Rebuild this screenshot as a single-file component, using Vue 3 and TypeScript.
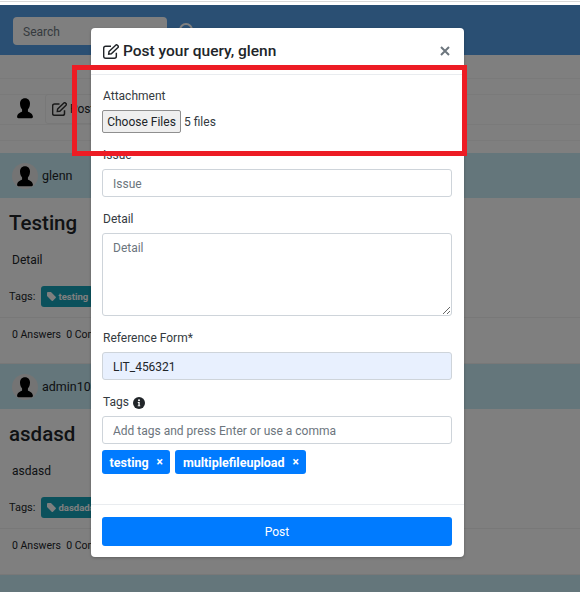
<template>
  <div class="page">
    <div class="browser-strip"></div>
    <nav class="navbar">
      <div class="search-box">Search</div>
      <svg class="search-icon" width="20" height="20" viewBox="0 0 20 20">
        <circle cx="9" cy="9" r="6" fill="none" stroke="#fff" stroke-width="2" />
      </svg>
    </nav>

    <div class="ask-row">
      <svg class="avatar-plain" width="20" height="24" viewBox="0 0 24 26">
        <path :d="silhouette" fill="#000" />
      </svg>
      <div class="ask-btn">
        <svg class="edit-small" width="15" height="14" viewBox="0 0 24 22">
          <path :d="editBox" fill="none" stroke="#333" stroke-width="2.4" />
          <path :d="editPen" fill="none" stroke="#333" stroke-width="2.4" />
        </svg>
        Post
      </div>
    </div>
    <div class="ask-foot"></div>

    <section v-for="card in cards" :key="card.title" class="card">
      <div class="card-head">
        <span class="avatar-round">
          <svg width="20" height="24" viewBox="0 0 24 26">
            <path :d="silhouette" fill="#000" />
          </svg>
        </span>
        <span class="card-user">{{ card.user }}</span>
      </div>
      <h2 class="card-title">{{ card.title }}</h2>
      <p class="card-detail">{{ card.detail }}</p>
      <div class="card-tags">
        Tags:
        <span class="tag-badge">
          <svg width="9" height="9" viewBox="0 0 10 10">
            <path d="M0 1a1 1 0 0 1 1-1h3.4l5.2 5.2a1 1 0 0 1 0 1.4L6.600 9.600a1 1 0 0 1-1.400 0L0 4.400z" fill="#fff" />
          </svg>
          {{ card.tag }}
        </span>
      </div>
      <div class="card-foot">0 Answers &nbsp;0 Comments</div>
    </section>

    <div class="last-card"></div>

    <div class="overlay"></div>

    <div class="modal">
      <header class="modal-header">
        <h5 class="modal-title">
          <svg width="16" height="15" viewBox="0 0 24 22">
            <path :d="editBox" fill="none" stroke="#212529" stroke-width="2.200" />
            <path :d="editPen" fill="none" stroke="#212529" stroke-width="2.200" />
          </svg>
          Post your query, glenn
        </h5>
        <svg class="close" width="10" height="10" viewBox="0 0 10 10">
          <path d="M1 1l8 8M9 1l-8 8" fill="none" stroke="#6c757d" stroke-width="2" />
        </svg>
      </header>

      <div class="modal-body">
        <div class="group attach">
          <label>Attachment</label>
          <div class="file-row">
            <button class="file-btn">Choose Files</button>
            <span>5 files</span>
          </div>
        </div>
        <div class="group">
          <label>Issue</label>
          <input class="control" type="text" placeholder="Issue" />
        </div>
        <div class="group">
          <label>Detail</label>
          <textarea class="control area" placeholder="Detail"></textarea>
        </div>
        <div class="group">
          <label>Reference Form*</label>
          <input class="control filled" type="text" value="LIT_456321" />
        </div>
        <div class="group tags-group">
          <label class="tags-label">
            Tags
            <svg width="12" height="12" viewBox="0 0 12 12">
              <circle cx="6" cy="6" r="6" fill="#212529" />
              <circle cx="6" cy="3.200" r="1" fill="#fff" />
              <path d="M4.800 5h1.900v3.400h.6v.9H4.700v-.9h.7V5.900h-.6z" fill="#fff" />
            </svg>
          </label>
          <input class="control" type="text" placeholder="Add tags and press Enter or use a comma" />
          <div class="chips">
            <span v-for="chip in chips" :key="chip" class="chip">{{ chip }}<i>×</i></span>
          </div>
        </div>
      </div>

      <footer class="modal-footer">
        <button class="post-btn">Post</button>
      </footer>
    </div>

    <div class="highlight"></div>
  </div>
</template>

<script setup lang="ts">
interface Card {
  user: string;
  title: string;
  detail: string;
  tag: string;
}

const cards: Card[] = [
  { user: 'glenn', title: 'Testing', detail: 'Detail', tag: 'testing' },
  { user: 'admin100', title: 'asdasd', detail: 'asdasd', tag: 'dasdadsa' },
];

const chips: string[] = ['testing', 'multiplefileupload'];

const silhouette =
  'M12 0C8 0 6 3 6 6.500c0 3 1 5.500 2.500 7v2.500C6.500 17.500 3 18 2.500 22c-.1 1 .5 2 1.500 2h16c1 0 1.600-1 1.500-2-.5-4-4-4.500-6-6v-2.500c1.500-1.500 2.500-4 2.500-7C18 3 16 0 12 0z';
const editBox = 'M20 13v5a3 3 0 0 1-3 3H4a3 3 0 0 1-3-3V6a3 3 0 0 1 3-3h8';
const editPen = 'M9 11 19 1.500a1.800 1.800 0 0 1 2.500 0l.9.9a1.800 1.800 0 0 1 0 2.500L12.500 14.500 8.500 15z';
</script>

<style scoped>
.page {
  position: relative;
  width: 580px;
  height: 592px;
  overflow: hidden;
  background: #fff;
  font-family: Roboto, "Noto Sans", sans-serif;
  font-size: 12px;
  color: #212529;
}

.browser-strip {
  height: 5px;
  box-sizing: border-box;
  border-top: 1px solid #fff;
  background: linear-gradient(#d8d8d8 0 1px, #fff 1px);
}

.navbar {
  display: flex;
  align-items: center;
  gap: 10px;
  height: 50px;
  padding: 2px 0 0 13px;
  box-sizing: border-box;
  background: #549ee6;
}

.search-box {
  display: flex;
  align-items: center;
  width: 154px;
  height: 28px;
  padding: 1px 0 0 10px;
  box-sizing: border-box;
  border-radius: 4px;
  background: #fff;
  color: #6c757d;
}

.ask-row {
  display: flex;
  align-items: center;
  gap: 10px;
  height: 69px;
  padding: 39px 0 0 15px;
  box-sizing: border-box;
  background:
    linear-gradient(#f4f4f4, #f4f4f4) 0 23px / 100% 1px no-repeat,
    linear-gradient(#f4f4f4, #f4f4f4) 0 39px / 100% 1px no-repeat;
}

.ask-btn {
  display: flex;
  align-items: center;
  gap: 3px;
  height: 30px;
  padding: 0 6px;
  box-sizing: border-box;
  border: 1px solid #f0f0f0;
  border-radius: 3px;
}

.ask-foot {
  height: 15px;
  border-top: 1px solid #f4f4f4;
  border-bottom: 1px solid #f4f4f4;
  margin-bottom: 12px;
}

.card {
  height: 211px;
  box-sizing: border-box;
  display: flex;
  flex-direction: column;
  border-bottom: 1px solid #f0f0f0;
}

.card-head {
  display: flex;
  align-items: center;
  gap: 4px;
  height: 45px;
  flex: none;
  padding-left: 12px;
  box-sizing: border-box;
  background: #c8ecf6;
}

.avatar-round {
  display: flex;
  align-items: flex-end;
  justify-content: center;
  width: 26px;
  height: 26px;
  border-radius: 50%;
  background: #e8e8e8;
  overflow: hidden;
}

.card-user {
  font-size: 12.500px;
}

.card-title {
  margin: 10px 0 0 9px;
  font-size: 20.500px;
  line-height: 30px;
  font-weight: 500;
}

.card-detail {
  margin: 14px 0 0 12px;
  line-height: 17px;
}

.card-tags {
  display: flex;
  align-items: center;
  gap: 6px;
  margin: 17px 0 0 9px;
  height: 21px;
  font-size: 11px;
}

.tag-badge {
  display: inline-flex;
  align-items: center;
  gap: 2px;
  height: 21px;
  padding: 0 5px 0 6px;
  border-radius: 3px;
  background: #17a2b8;
  color: #fff;
  font-size: 9.500px;
  font-weight: 700;
}

.card-foot {
  margin-top: 10px;
  padding: 10px 0 0 12px;
  height: 35px;
  box-sizing: border-box;
  border-top: 1px solid #f0f0f0;
  font-size: 10.500px;
}

.last-card {
  height: 20px;
  background: #c8ecf6;
}

.overlay {
  position: absolute;
  inset: 5px 0 0 0;
  background: rgba(0, 0, 0, 0.5);
}

.modal {
  position: absolute;
  left: 91px;
  top: 28px;
  width: 373px;
  height: 529px;
  display: flex;
  flex-direction: column;
  border-radius: 4px;
  background: #fff;
  box-shadow: 0 1px 3px rgba(0, 0, 0, 0.25);
}

.modal-header {
  display: flex;
  align-items: center;
  justify-content: space-between;
  height: 47px;
  padding: 0 14px 0 12px;
  box-sizing: border-box;
  border-bottom: 1px solid #e9ecef;
  flex: none;
}

.modal-title {
  display: flex;
  align-items: center;
  gap: 4px;
  margin: 0;
  font-size: 15.500px;
  font-weight: 500;
}

.modal-body {
  flex: 1;
  padding: 12px 12px 0 11px;
}

.group {
  margin-bottom: 13px;
}

.group label {
  display: block;
  margin-bottom: 5px;
  padding: 1px 0 0 1px;
  line-height: 17px;
  color: #343a40;
}

.file-row {
  display: flex;
  align-items: center;
  gap: 3px;
  color: #343a40;
}

.file-btn {
  width: 79px;
  height: 23px;
  padding: 0;
  border: 1px solid #8f8f8f;
  border-radius: 2px;
  background: #efefef;
  font: inherit;
  color: #212529;
}

.control {
  display: block;
  width: 100%;
  height: 28px;
  padding: 1px 10px 0;
  box-sizing: border-box;
  border: 1px solid #ced4da;
  border-radius: 3px;
  background: #fff;
  font: inherit;
  color: #212529;
  outline: none;
}

.control::placeholder {
  color: #6c757d;
  opacity: 1;
}

.area {
  height: 83px;
  padding-top: 7px;
  resize: vertical;
}

.filled {
  background: #e8f0fe;
}

.group .tags-label {
  display: flex;
  align-items: center;
  gap: 4px;
}

.tags-group {
  margin-bottom: 0;
}

.chips {
  display: flex;
  gap: 5px;
  margin-top: 6px;
}

.chip {
  display: flex;
  align-items: center;
  gap: 8px;
  height: 24px;
  padding: 0 7.500px;
  border-radius: 3px;
  background: #007bff;
  color: #fff;
  font-size: 12.500px;
  font-weight: 700;
}

.chip i {
  font-style: normal;
  font-size: 12px;
}

.modal-footer {
  flex: none;
  height: 53px;
  padding: 12px 12px 0 11px;
  box-sizing: border-box;
  border-top: 1px solid #e9ecef;
}

.post-btn {
  display: block;
  width: 100%;
  height: 29px;
  border: none;
  border-radius: 3px;
  background: #007bff;
  color: #fff;
  font: inherit;
}

.highlight {
  position: absolute;
  left: 72px;
  top: 65px;
  width: 395px;
  height: 91px;
  box-sizing: border-box;
  border: 5px solid #ed1c24;
}
</style>
